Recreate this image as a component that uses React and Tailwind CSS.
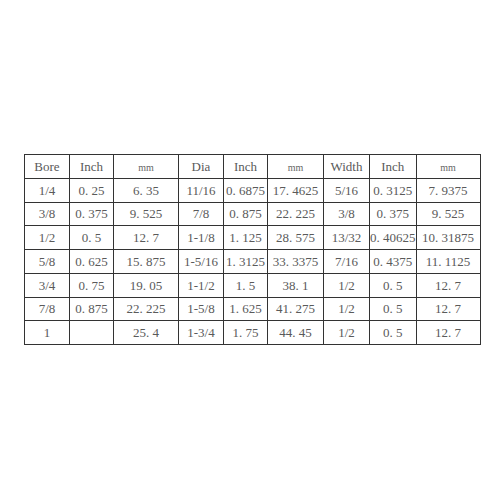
const widths = [45, 44, 65, 45, 44, 56, 46, 44, 64];

const header = ['Bore', 'Inch', 'mm', 'Dia', 'Inch', 'mm', 'Width', 'Inch', 'mm'];

const rows = [
  ['1/4', '0.25', '6.35', '11/16', '0.6875', '17.4625', '5/16', '0.3125', '7.9375'],
  ['3/8', '0.375', '9.525', '7/8', '0.875', '22.225', '3/8', '0.375', '9.525'],
  ['1/2', '0.5', '12.7', '1-1/8', '1.125', '28.575', '13/32', '0.40625', '10.31875'],
  ['5/8', '0.625', '15.875', '1-5/16', '1.3125', '33.3375', '7/16', '0.4375', '11.1125'],
  ['3/4', '0.75', '19.05', '1-1/2', '1.5', '38.1', '1/2', '0.5', '12.7'],
  ['7/8', '0.875', '22.225', '1-5/8', '1.625', '41.275', '1/2', '0.5', '12.7'],
  ['1', '', '25.4', '1-3/4', '1.75', '44.45', '1/2', '0.5', '12.7'],
];

const Num = ({ v }) => {
  if (!v.includes('.')) return v;
  const [a, b] = v.split('.');
  return (
    <>
      {a}
      <span className="inline-block w-[0.5em] text-left">.</span>
      {b}
    </>
  );
};

const cell = 'border border-[#333] text-center p-0 leading-none whitespace-nowrap font-[family-name:Liberation_Serif,serif] text-[13px] text-[#5a5a5a]';

const App = () => {
  return (
    <div className="w-[500px] h-[500px] bg-white pt-[154px] pl-[24px] font-[family-name:Liberation_Serif,serif]">
      <table className="table-fixed border-collapse">
        <colgroup>
          {widths.map((w, i) => (
            <col key={i} style={{ width: w }} />
          ))}
        </colgroup>
        <tbody>
          <tr className="h-[23.75px]">
            {header.map((h, i) =>
              h === 'mm' ? (
                <td key={i} className={cell}>
                  <span className="text-[10px] text-[#666]">mm</span>
                </td>
              ) : (
                <td key={i} className={cell}>
                  {h}
                </td>
              )
            )}
          </tr>
          {rows.map((r, ri) => (
            <tr key={ri} className="h-[23.75px]">
              {r.map((c, ci) => (
                <td key={ci} className={cell}>
                  <Num v={c} />
                </td>
              ))}
            </tr>
          ))}
        </tbody>
      </table>
    </div>
  );
};

export default App;
